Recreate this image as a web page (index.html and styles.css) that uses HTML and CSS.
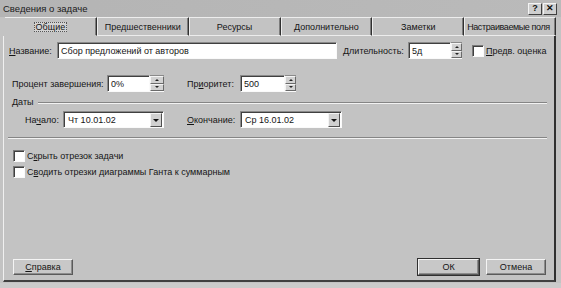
FILE: index.html
```html
<!DOCTYPE html>
<html lang="ru">
    <head>
        <meta charset="UTF-8" />
        <title>Сведения о задаче</title>
        <link rel="stylesheet" href="styles.css">
    </head>
    <body>
        <div class="dialog">
            <header class="titlebar">
                <span class="title">Сведения о задаче</span>
                <span class="caption-btns">
                    <span class="cap-btn">?</span>
                    <span class="cap-btn">&#x2715;</span>
                </span>
            </header>

            <nav class="tabs">
                <div class="tab active"><span class="focus">Общие</span></div>
                <div class="tab">Предшественники</div>
                <div class="tab">Ресурсы</div>
                <div class="tab">Дополнительно</div>
                <div class="tab">Заметки</div>
                <div class="tab">Настраиваемые поля</div>
            </nav>

            <section class="panel">
                <div class="row row-name">
                    <span class="lbl w-name"><u>Н</u>азвание:</span>
                    <div class="field w-title">Сбор предложений от авторов</div>
                    <span class="lbl w-dur"><u>Д</u>лительность:</span>
                    <div class="spin">
                        <div class="field w-dur-field">5д</div>
                        <div class="spinner"><span class="sb up"></span><span class="sb down"></span></div>
                    </div>
                    <span class="check check-est"></span>
                    <span class="lbl"><u>П</u>редв. оценка</span>
                </div>

                <div class="row row-pct">
                    <span class="lbl w-pct">Процент завершения:</span>
                    <div class="spin">
                        <div class="field w-pct-field">0%</div>
                        <div class="spinner wide"><span class="sb up"></span><span class="sb down"></span></div>
                    </div>
                    <span class="lbl w-prio">Пр<u>и</u>оритет:</span>
                    <div class="spin">
                        <div class="field w-prio-field">500</div>
                        <div class="spinner"><span class="sb up"></span><span class="sb down"></span></div>
                    </div>
                </div>

                <div class="group-head">
                    <span class="lbl">Даты</span>
                    <span class="etch"></span>
                </div>

                <div class="row row-dates">
                    <span class="lbl w-start">На<u>ч</u>ало:</span>
                    <div class="combo w-start-combo">
                        <span class="combo-text">Чт 10.01.02</span>
                        <span class="drop"></span>
                    </div>
                    <span class="lbl w-end"><u>О</u>кончание:</span>
                    <div class="combo w-end-combo">
                        <span class="combo-text">Ср 16.01.02</span>
                        <span class="drop"></span>
                    </div>
                </div>

                <div class="etch separator"></div>

                <div class="row row-check first">
                    <span class="check"></span>
                    <span class="lbl">С<u>к</u>рыть отрезок задачи</span>
                </div>
                <div class="row row-check">
                    <span class="check"></span>
                    <span class="lbl">С<u>в</u>одить отрезки диаграммы Ганта к суммарным</span>
                </div>

                <footer class="buttons">
                    <button class="btn"><u>С</u>правка</button>
                    <span class="btn-group">
                        <button class="btn default">ОК</button>
                        <button class="btn">Отмена</button>
                    </span>
                </footer>
            </section>
        </div>
    </body>
</html>
```

FILE: styles.css
```css
* {
    box-sizing: border-box;
}

html,
body {
    margin: 0;
    padding: 0;
    background: #cbcbcb;
}

body {
    width: 561px;
    height: 288px;
    font-family: "Liberation Sans", Arial, sans-serif;
    font-size: 9px;
    color: #151515;
}

u {
    text-decoration-thickness: 1px;
    text-underline-offset: 1px;
}

.dialog {
    width: 561px;
    height: 283px;
    background: #c3c3c3;
}

/* title bar */
.titlebar {
    height: 17px;
    display: flex;
    align-items: center;
    justify-content: space-between;
    padding: 0 4px 0 3px;
    background: linear-gradient(90deg, #b4b4b4, #bababa);
}

.title {
    font-size: 9.5px;
    color: #1a1a1a;
}

.caption-btns {
    display: flex;
    gap: 1px;
}

.cap-btn {
    width: 14px;
    height: 12px;
    display: flex;
    align-items: center;
    justify-content: center;
    background: #cfcfcf;
    border: 1px solid;
    border-color: #f4f4f4 #404040 #404040 #f4f4f4;
    font-weight: bold;
    font-size: 9px;
    line-height: 1;
    color: #111;
}

/* tabs */
.tabs {
    display: grid;
    grid-template-columns: repeat(6, minmax(0, 1fr));
    height: 19px;
    margin-left: 5px;
    width: 551px;
}

.tab {
    display: flex;
    align-items: center;
    justify-content: center;
    border-top: 1px solid #ededed;
    border-left: 1px solid #ededed;
    border-right: 1px solid #303030;
    box-shadow: inset -1px 0 0 #7c7c7c;
    border-bottom: 1px solid #ececec;
    white-space: nowrap;
    overflow: hidden;
}

.tab:last-child {
    letter-spacing: -0.4px;
    justify-content: flex-start;
    padding-left: 2px;
}

.tab.active {
    border-bottom-color: transparent;
    border-left: none;
}

.focus {
    padding: 0 2px;
    background: #d3d3d3;
    outline: 1px dotted #555;
    outline-offset: -1px;
}

/* panel */
.panel {
    height: 246px;
    margin-left: 3px;
    width: 553px;
    border-left: 1px solid #f0f0f0;
    border-right: 2px solid #303030;
    border-bottom: 2px solid #404040;
    display: flex;
    flex-direction: column;
    padding-bottom: 5px;
}

.row {
    display: flex;
    align-items: center;
}

.lbl {
    white-space: nowrap;
}

.field {
    height: 17px;
    background: #fff;
    border: 1px solid;
    border-color: #8a8a8a #fafafa #fafafa #8a8a8a;
    box-shadow: inset 1px 1px 0 #404040;
    padding: 0 3px;
    display: flex;
    align-items: center;
    white-space: nowrap;
}

.row-name {
    margin-top: 6px;
}

.w-name {
    margin-left: 5px;
    width: 48px;
}

.w-title {
    width: 280px;
}

.w-dur {
    margin-left: 6px;
    width: 65px;
}

.w-dur-field {
    width: 43px;
}

.spin {
    display: flex;
    height: 17px;
}

.spinner {
    width: 11px;
    display: flex;
    flex-direction: column;
    background: #fff;
    border-top: 1px solid #8a8a8a;
    border-bottom: 1px solid #fafafa;
}

.spinner.wide {
    width: 14px;
}

.sb {
    flex: 1;
    background: #d2d2d2;
    border: 1px solid;
    border-color: #f4f4f4 #6a6a6a #6a6a6a #f4f4f4;
    position: relative;
}

.sb::after {
    content: "";
    position: absolute;
    left: 50%;
    top: 50%;
    margin: -1px 0 0 -2px;
    border-left: 2px solid transparent;
    border-right: 2px solid transparent;
}

.sb.up::after {
    border-bottom: 2px solid #222;
}

.sb.down::after {
    border-top: 2px solid #222;
}

.check {
    width: 12px;
    height: 12px;
    background: #fff;
    border: 1px solid;
    border-color: #7a7a7a #fafafa #fafafa #7a7a7a;
    box-shadow: inset 1px 1px 0 #404040;
    flex: none;
}

.check-est {
    margin-left: 10px;
}

.check + .lbl {
    margin-left: 2px;
}

.row-pct {
    margin-top: 16px;
}

.w-pct {
    margin-left: 8px;
    width: 95px;
}

.w-pct-field {
    width: 43px;
}

.w-prio {
    margin-left: 23px;
    width: 53px;
}

.w-prio-field {
    width: 45px;
}

/* date group */
.group-head {
    display: flex;
    align-items: center;
    margin: 4px 7px 0 8px;
    height: 12px;
}

.group-head .etch {
    flex: 1;
    margin-left: 4px;
    margin-top: 2px;
}

.etch {
    display: block;
    height: 2px;
    border-top: 1px solid #858585;
    border-bottom: 1px solid #f2f2f2;
}

.row-dates {
    margin-top: 3px;
}

.w-start {
    margin-left: 21px;
    width: 38px;
}

.w-end {
    margin-left: 23px;
    width: 53px;
}

.combo {
    height: 17px;
    display: flex;
    align-items: stretch;
    background: #fff;
    border: 1px solid;
    border-color: #8a8a8a #fafafa #fafafa #8a8a8a;
    box-shadow: inset 1px 1px 0 #404040;
    padding: 1px 1px 0 1px;
}

.w-start-combo {
    width: 101px;
}

.w-end-combo {
    width: 102px;
}

.combo-text {
    flex: 1;
    padding-left: 3px;
    display: flex;
    align-items: center;
}

.drop {
    width: 12px;
    background: #d0d0d0;
    border: 1px solid;
    border-color: #f4f4f4 #505050 #505050 #f4f4f4;
    display: flex;
    align-items: center;
    justify-content: center;
}

.drop::after {
    content: "";
    border-left: 3px solid transparent;
    border-right: 3px solid transparent;
    border-top: 3px solid #111;
}

.separator {
    margin: 9px 7px 0 4px;
}

.row-check {
    height: 14px;
    margin-left: 9px;
    margin-top: 2px;
}

.row-check.first {
    margin-top: 10px;
}

/* bottom buttons */
.buttons {
    margin-top: auto;
    display: flex;
    justify-content: space-between;
    padding: 0 8px 0 9px;
}

.btn-group {
    display: flex;
    gap: 7px;
}

.btn {
    width: 60px;
    height: 16px;
    padding: 0;
    font: inherit;
    color: inherit;
    background: #c8c8c8;
    border: 1px solid;
    border-color: #f4f4f4 #5a5a5a #5a5a5a #f4f4f4;
    box-shadow: inset -1px -1px 0 #8c8c8c;
}

.btn.default {
    width: 61px;
    outline: 1px solid #303030;
}
```
